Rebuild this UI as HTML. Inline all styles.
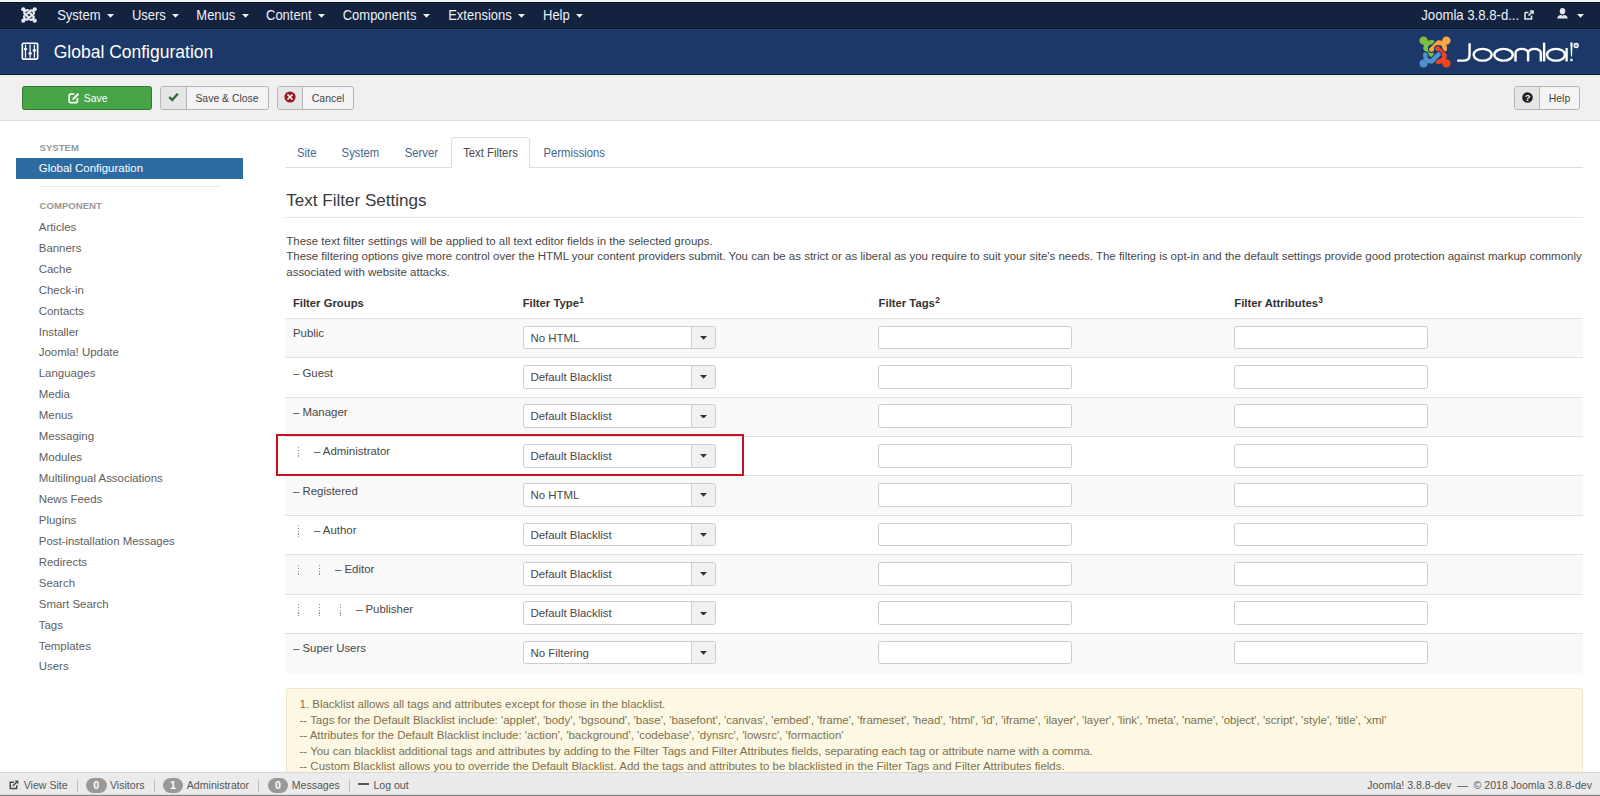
<!DOCTYPE html><html><head><meta charset="utf-8"><style>
*{box-sizing:border-box}
html,body{margin:0;padding:0;width:1600px;height:796px;overflow:hidden;background:#fff;font-family:"Liberation Sans",sans-serif;color:#333}
.a{position:absolute;white-space:nowrap;line-height:1}
.r{position:absolute}
</style></head><body>
<div class="r" style="left:0;top:0;width:1600px;height:2px;background:#f2f3f5"></div>
<div class="r" style="left:0;top:2px;width:1600px;height:26.5px;background:#13233f;border-top:1px solid #0a1326;border-bottom:1px solid #0b1428"></div>
<div class="a" style="left:57.20px;top:9px;font-size:13px;color:#eef0f6;font-weight:400;transform:scaleY(1.08);transform-origin:0 11px;">System</div>
<div class="a" style="left:131.90px;top:9px;font-size:13px;color:#eef0f6;font-weight:400;transform:scaleY(1.08);transform-origin:0 11px;">Users</div>
<div class="a" style="left:196.30px;top:9px;font-size:13px;color:#eef0f6;font-weight:400;transform:scaleY(1.08);transform-origin:0 11px;">Menus</div>
<div class="a" style="left:266.00px;top:9px;font-size:13px;color:#eef0f6;font-weight:400;transform:scaleY(1.08);transform-origin:0 11px;">Content</div>
<div class="a" style="left:342.70px;top:9px;font-size:13px;color:#eef0f6;font-weight:400;transform:scaleY(1.08);transform-origin:0 11px;">Components</div>
<div class="a" style="left:448.20px;top:9px;font-size:13px;color:#eef0f6;font-weight:400;transform:scaleY(1.08);transform-origin:0 11px;">Extensions</div>
<div class="a" style="left:543.00px;top:9px;font-size:13px;color:#eef0f6;font-weight:400;transform:scaleY(1.08);transform-origin:0 11px;">Help</div>
<svg class="r" style="left:106.84px;top:14.2px" width="7" height="3.7" viewBox="0 0 7 3.7"><polygon points="0,0 7,0 3.5,3.7" fill="#eef0f6"/></svg>
<svg class="r" style="left:172.15000000000003px;top:14.2px" width="7" height="3.7" viewBox="0 0 7 3.7"><polygon points="0,0 7,0 3.5,3.7" fill="#eef0f6"/></svg>
<svg class="r" style="left:241.63000000000002px;top:14.2px" width="7" height="3.7" viewBox="0 0 7 3.7"><polygon points="0,0 7,0 3.5,3.7" fill="#eef0f6"/></svg>
<svg class="r" style="left:317.85px;top:14.2px" width="7" height="3.7" viewBox="0 0 7 3.7"><polygon points="0,0 7,0 3.5,3.7" fill="#eef0f6"/></svg>
<svg class="r" style="left:422.71999999999997px;top:14.2px" width="7" height="3.7" viewBox="0 0 7 3.7"><polygon points="0,0 7,0 3.5,3.7" fill="#eef0f6"/></svg>
<svg class="r" style="left:518.0899999999999px;top:14.2px" width="7" height="3.7" viewBox="0 0 7 3.7"><polygon points="0,0 7,0 3.5,3.7" fill="#eef0f6"/></svg>
<svg class="r" style="left:576.05px;top:14.2px" width="7" height="3.7" viewBox="0 0 7 3.7"><polygon points="0,0 7,0 3.5,3.7" fill="#eef0f6"/></svg>
<svg class="r" style="left:20.5px;top:6.5px" width="16" height="16" viewBox="0 0 32 32"><path d="M13.50,6.30 Q6.60,6.00 6.60,12.50 L13.60,19.60" stroke="#e6e8ef" stroke-width="4.6" fill="none" stroke-linecap="round"/><circle cx="4.60" cy="4.60" r="4.2" fill="#e6e8ef"/><path d="M25.70,13.50 Q26.00,6.60 19.50,6.60 L12.40,13.60" stroke="#e6e8ef" stroke-width="4.6" fill="none" stroke-linecap="round"/><circle cx="27.40" cy="4.60" r="4.2" fill="#e6e8ef"/><path d="M18.50,25.70 Q25.40,26.00 25.40,19.50 L18.40,12.40" stroke="#e6e8ef" stroke-width="4.6" fill="none" stroke-linecap="round"/><circle cx="27.40" cy="27.40" r="4.2" fill="#e6e8ef"/><path d="M6.30,18.50 Q6.00,25.40 12.50,25.40 L19.60,18.40" stroke="#e6e8ef" stroke-width="4.6" fill="none" stroke-linecap="round"/><circle cx="4.60" cy="27.40" r="4.2" fill="#e6e8ef"/></svg>
<div class="a" style="left:1421.30px;top:9px;font-size:13.15px;color:#eef0f6;font-weight:400;transform:scaleY(1.08);transform-origin:0 11px;">Joomla 3.8.8-d...</div>
<svg class="r" style="left:1523.5px;top:10px" width="10" height="10" viewBox="0 0 10 10">
<path d="M1 2.5 H4.5 M1 2.5 V9 H7.5 V5.5" stroke="#e4e6ee" stroke-width="1.6" fill="none"/>
<path d="M4.5 5.5 L9 1 M6 1 H9 V4" stroke="#e4e6ee" stroke-width="1.6" fill="none"/></svg>
<svg class="r" style="left:1556.5px;top:7px" width="11" height="12" viewBox="0 0 11 12">
<ellipse cx="5.5" cy="4.2" rx="2.7" ry="3.1" fill="#e4e6ee"/><path d="M0.3 11.6 C0.3 9 2 8.2 4 7.9 L5.5 8.8 L7 7.9 C9 8.2 10.7 9 10.7 11.6 Z" fill="#e4e6ee"/></svg>
<svg class="r" style="left:1576.8px;top:14.2px" width="7" height="3.7" viewBox="0 0 7 3.7"><polygon points="0,0 7,0 3.5,3.7" fill="#eef0f6"/></svg>
<div class="r" style="left:0;top:28.5px;width:1600px;height:46px;background:#1b3868;border-top:1px solid #2a4575;border-bottom:1px solid #0d1c3a"></div>
<div class="r" style="left:0;top:74.5px;width:1600px;height:1px;background:#e4e9f0"></div>
<div class="a" style="left:53.70px;top:44px;font-size:17.5px;color:#ffffff;font-weight:400;">Global Configuration</div>
<svg class="r" style="left:21px;top:41.5px" width="18" height="19" viewBox="0 0 18 19">
<rect x="1.33" y="1.23" width="15.3" height="15.9" rx="1.2" fill="none" stroke="#fff" stroke-width="1.66"/>
<path d="M4.5 2.6 V15.8 M9.1 2.6 V15.8 M13.4 2.6 V15.8" stroke="#fff" stroke-width="1.2"/>
<rect x="2.9" y="6.05" width="3.2" height="2.3" rx="1" fill="#fff"/><rect x="7.3" y="10.25" width="3.6" height="2.3" rx="1" fill="#fff"/><rect x="11.6" y="7.15" width="3.6" height="2.3" rx="1" fill="#fff"/>
</svg>
<svg class="r" style="left:1419px;top:36px" width="32" height="32" viewBox="0 0 32 32"><path d="M13.50,6.30 Q6.60,6.00 6.60,12.50 L13.60,19.60" stroke="#1b3868" stroke-width="6.6" fill="none" stroke-linecap="round"/><path d="M13.50,6.30 Q6.60,6.00 6.60,12.50 L13.60,19.60" stroke="#7ac143" stroke-width="4.6" fill="none" stroke-linecap="round"/><circle cx="4.60" cy="4.60" r="4.2" fill="#7ac143"/><path d="M25.70,13.50 Q26.00,6.60 19.50,6.60 L12.40,13.60" stroke="#1b3868" stroke-width="6.6" fill="none" stroke-linecap="round"/><path d="M25.70,13.50 Q26.00,6.60 19.50,6.60 L12.40,13.60" stroke="#f9a541" stroke-width="4.6" fill="none" stroke-linecap="round"/><circle cx="27.40" cy="4.60" r="4.2" fill="#f9a541"/><path d="M18.50,25.70 Q25.40,26.00 25.40,19.50 L18.40,12.40" stroke="#1b3868" stroke-width="6.6" fill="none" stroke-linecap="round"/><path d="M18.50,25.70 Q25.40,26.00 25.40,19.50 L18.40,12.40" stroke="#f44321" stroke-width="4.6" fill="none" stroke-linecap="round"/><circle cx="27.40" cy="27.40" r="4.2" fill="#f44321"/><path d="M6.30,18.50 Q6.00,25.40 12.50,25.40 L19.60,18.40" stroke="#1b3868" stroke-width="6.6" fill="none" stroke-linecap="round"/><path d="M6.30,18.50 Q6.00,25.40 12.50,25.40 L19.60,18.40" stroke="#5091cd" stroke-width="4.6" fill="none" stroke-linecap="round"/><circle cx="4.60" cy="27.40" r="4.2" fill="#5091cd"/></svg>
<svg class="r" style="left:1452px;top:36px" width="138" height="32" viewBox="0 0 138 32">
<g stroke="#fff" stroke-width="2.4" fill="none">
<path d="M17.6,7.2 L17.6,18.5 C17.6,22.6 15.6,24.6 12,24.6 L5.2,24.6"/>
<ellipse cx="30.65" cy="18.75" rx="9" ry="5.85"/>
<ellipse cx="51.55" cy="18.75" rx="9.2" ry="5.85"/>
<path d="M63.5,25.4 V17 A6.3,4.1 0 0 1 76.1,17 V25.4 M76.1,17 A6.3,4.1 0 0 1 88.8,17 V25.4"/>
<path d="M92.1,6.6 V25.4"/>
<ellipse cx="104" cy="18.75" rx="9" ry="5.85"/>
<path d="M114.6,12 V25.4"/>
<circle cx="124.2" cy="9.5" r="2.1" stroke-width="1.1" fill="#8fa0bd"/>
</g>
<path d="M118.3,6.5 H120.7 L120,20.5 H119 Z" fill="#fff"/>
<rect x="118.4" y="22.8" width="2.2" height="2.4" fill="#fff"/>
</svg>
<div class="r" style="left:0;top:74.5px;width:1600px;height:46.5px;background:#f0f0f0;border-top:1px solid #e2e7ee;border-bottom:1px solid #d9d9d9"></div>
<div class="r" style="left:22px;top:86px;width:130px;height:24px;background:#47a447;border:1px solid #307a30;border-radius:2.5px"></div>
<svg class="r" style="left:67.5px;top:92px" width="12" height="11.5" viewBox="0 0 12 11.5">
<path d="M6.2 2.2 H2.6 Q1.2 2.2 1.2 3.6 V9.2 Q1.2 10.6 2.6 10.6 H8 Q9.4 10.6 9.4 9.2 V6" stroke="#fff" stroke-width="1.7" fill="none"/>
<path d="M4.3 8.1 L4.6 6 L9.6 1 L11.2 2.6 L6.2 7.6 Z" fill="#fff"/></svg>
<div class="a" style="left:83.80px;top:94px;font-size:10.45px;color:#fff;font-weight:400;transform:scaleY(1.06);transform-origin:0 8px;">Save</div>
<div class="r" style="left:160px;top:86px;width:108.5px;height:23.5px;background:#f4f4f4;border:1px solid #b5b5b5;border-radius:3px;overflow:hidden"><div class="r" style="left:0;top:0;width:26px;height:100%;background:#e6e6e6;border-right:1px solid #b5b5b5"></div></div>
<div class="a" style="left:195.40px;top:94px;font-size:10.45px;color:#444;font-weight:400;transform:scaleY(1.06);transform-origin:0 8px;">Save &amp; Close</div>
<svg class="r" style="left:168px;top:92px" width="11" height="10" viewBox="0 0 11 10">
<path d="M1.2 5 L4.2 8 L9.8 1.8" stroke="#2e6b2e" stroke-width="2.4" fill="none"/></svg>
<div class="r" style="left:276.8px;top:86px;width:77.39999999999998px;height:23.5px;background:#f4f4f4;border:1px solid #b5b5b5;border-radius:3px;overflow:hidden"><div class="r" style="left:0;top:0;width:25px;height:100%;background:#e6e6e6;border-right:1px solid #b5b5b5"></div></div>
<div class="a" style="left:311.80px;top:94px;font-size:10.45px;color:#444;font-weight:400;transform:scaleY(1.06);transform-origin:0 8px;">Cancel</div>
<svg class="r" style="left:284.3px;top:91px" width="12" height="12" viewBox="0 0 12 12">
<circle cx="6" cy="6" r="5.6" fill="#931c20"/><path d="M3.5 3.5 L8.5 8.5 M8.5 3.5 L3.5 8.5" stroke="#fff" stroke-width="1.5"/></svg>
<div class="r" style="left:1514px;top:86px;width:65.5px;height:23.5px;background:#f4f4f4;border:1px solid #b5b5b5;border-radius:3px;overflow:hidden"><div class="r" style="left:0;top:0;width:25.4px;height:100%;background:#e6e6e6;border-right:1px solid #b5b5b5"></div></div>
<div class="a" style="left:1548.75px;top:94px;font-size:10.45px;color:#444;font-weight:400;transform:scaleY(1.06);transform-origin:0 8px;">Help</div>
<svg class="r" style="left:1521.5px;top:91.5px" width="11" height="11" viewBox="0 0 11 11">
<circle cx="5.5" cy="5.5" r="5.3" fill="#222"/><text x="5.6" y="9.1" font-family="Liberation Sans" font-weight="bold" font-size="9.5" fill="#f4f4f4" text-anchor="middle">?</text></svg>
<div class="a" style="left:39.50px;top:143px;font-size:9.6px;color:#999;font-weight:700;">SYSTEM</div>
<div class="r" style="left:16px;top:158.2px;width:226.7px;height:20.6px;background:#2d6ca2"></div>
<div class="a" style="left:38.80px;top:163px;font-size:11.45px;color:#fff;font-weight:400;">Global Configuration</div>
<div class="r" style="left:40px;top:186px;width:180px;height:1px;background:#ebebeb"></div>
<div class="a" style="left:39.50px;top:201px;font-size:9.6px;color:#999;font-weight:700;">COMPONENT</div>
<div class="a" style="left:38.75px;top:222px;font-size:11.45px;color:#5e5e5e;font-weight:400;">Articles</div>
<div class="a" style="left:38.75px;top:243px;font-size:11.45px;color:#5e5e5e;font-weight:400;">Banners</div>
<div class="a" style="left:38.75px;top:264px;font-size:11.45px;color:#5e5e5e;font-weight:400;">Cache</div>
<div class="a" style="left:38.75px;top:285px;font-size:11.45px;color:#5e5e5e;font-weight:400;">Check-in</div>
<div class="a" style="left:38.75px;top:306px;font-size:11.45px;color:#5e5e5e;font-weight:400;">Contacts</div>
<div class="a" style="left:38.75px;top:327px;font-size:11.45px;color:#5e5e5e;font-weight:400;">Installer</div>
<div class="a" style="left:38.75px;top:347px;font-size:11.45px;color:#5e5e5e;font-weight:400;">Joomla! Update</div>
<div class="a" style="left:38.75px;top:368px;font-size:11.45px;color:#5e5e5e;font-weight:400;">Languages</div>
<div class="a" style="left:38.75px;top:389px;font-size:11.45px;color:#5e5e5e;font-weight:400;">Media</div>
<div class="a" style="left:38.75px;top:410px;font-size:11.45px;color:#5e5e5e;font-weight:400;">Menus</div>
<div class="a" style="left:38.75px;top:431px;font-size:11.45px;color:#5e5e5e;font-weight:400;">Messaging</div>
<div class="a" style="left:38.75px;top:452px;font-size:11.45px;color:#5e5e5e;font-weight:400;">Modules</div>
<div class="a" style="left:38.75px;top:473px;font-size:11.45px;color:#5e5e5e;font-weight:400;">Multilingual Associations</div>
<div class="a" style="left:38.75px;top:494px;font-size:11.45px;color:#5e5e5e;font-weight:400;">News Feeds</div>
<div class="a" style="left:38.75px;top:515px;font-size:11.45px;color:#5e5e5e;font-weight:400;">Plugins</div>
<div class="a" style="left:38.75px;top:536px;font-size:11.45px;color:#5e5e5e;font-weight:400;">Post-installation Messages</div>
<div class="a" style="left:38.75px;top:557px;font-size:11.45px;color:#5e5e5e;font-weight:400;">Redirects</div>
<div class="a" style="left:38.75px;top:578px;font-size:11.45px;color:#5e5e5e;font-weight:400;">Search</div>
<div class="a" style="left:38.75px;top:599px;font-size:11.45px;color:#5e5e5e;font-weight:400;">Smart Search</div>
<div class="a" style="left:38.75px;top:620px;font-size:11.45px;color:#5e5e5e;font-weight:400;">Tags</div>
<div class="a" style="left:38.75px;top:641px;font-size:11.45px;color:#5e5e5e;font-weight:400;">Templates</div>
<div class="a" style="left:38.75px;top:661px;font-size:11.45px;color:#5e5e5e;font-weight:400;">Users</div>
<div class="r" style="left:285px;top:167.4px;width:1298px;height:1px;background:#ddd"></div>
<div class="r" style="left:451px;top:137.2px;width:79px;height:31.3px;background:#fff;border:1px solid #ddd;border-bottom:none;border-radius:4px 4px 0 0"></div>
<div class="a" style="left:297.00px;top:148px;font-size:11.3px;color:#46648c;font-weight:400;transform:scaleY(1.08);transform-origin:0 9px;">Site</div>
<div class="a" style="left:341.60px;top:148px;font-size:11.3px;color:#46648c;font-weight:400;transform:scaleY(1.08);transform-origin:0 9px;">System</div>
<div class="a" style="left:404.70px;top:148px;font-size:11.3px;color:#46648c;font-weight:400;transform:scaleY(1.08);transform-origin:0 9px;">Server</div>
<div class="a" style="left:463.20px;top:148px;font-size:11.3px;color:#4a4a4a;font-weight:400;transform:scaleY(1.08);transform-origin:0 9px;">Text Filters</div>
<div class="a" style="left:543.50px;top:148px;font-size:11.3px;color:#46648c;font-weight:400;transform:scaleY(1.08);transform-origin:0 9px;">Permissions</div>
<div class="a" style="left:286.20px;top:192px;font-size:17.08px;color:#3a3a3a;font-weight:400;">Text Filter Settings</div>
<div class="r" style="left:285px;top:216.7px;width:1298px;height:1px;background:#e5e5e5"></div>
<div class="a" style="left:286.25px;top:236px;font-size:11.49px;color:#474747;font-weight:400;">These text filter settings will be applied to all text editor fields in the selected groups.</div>
<div class="a" style="left:286.25px;top:251px;font-size:11.49px;color:#474747;font-weight:400;">These filtering options give more control over the HTML your content providers submit. You can be as strict or as liberal as you require to suit your site's needs. The filtering is opt-in and the default settings provide good protection against markup commonly</div>
<div class="a" style="left:286.25px;top:267px;font-size:11.49px;color:#474747;font-weight:400;">associated with website attacks.</div>
<div class="a" style="left:292.90px;top:298px;font-size:11.3px;color:#333;font-weight:700;">Filter Groups</div>
<div class="a" style="left:522.65px;top:298px;font-size:11.3px;color:#333;font-weight:700;">Filter Type<span style="font-size:8.3px;position:relative;top:-4.3px;margin-left:0.3px">1</span></div>
<div class="a" style="left:878.60px;top:298px;font-size:11.3px;color:#333;font-weight:700;">Filter Tags<span style="font-size:8.3px;position:relative;top:-4.3px;margin-left:0.3px">2</span></div>
<div class="a" style="left:1234.30px;top:298px;font-size:11.3px;color:#333;font-weight:700;">Filter Attributes<span style="font-size:8.3px;position:relative;top:-4.3px;margin-left:0.3px">3</span></div>
<div class="r" style="left:285px;top:318.00px;width:1298px;height:40.37px;background:#f9f9f9;border-top:1px solid #e1e1e1"></div>
<div class="a" style="left:292.90px;top:328px;font-size:11.45px;color:#474747;font-weight:400;">Public</div>
<div class="r" style="left:522.5px;top:325.70px;width:193.5px;height:23.8px;background:#fff;border:1px solid #cdcdcd;border-radius:2.5px;overflow:hidden"><div class="r" style="right:0;top:0;width:24.2px;height:100%;background:#f1f1f1;border-left:1px solid #d0d0d0"></div></div>
<svg class="r" style="left:700px;top:336.0px" width="7" height="3.7" viewBox="0 0 7 3.7"><polygon points="0,0 7,0 3.5,3.7" fill="#333"/></svg>
<div class="a" style="left:530.40px;top:333px;font-size:11.45px;color:#474747;font-weight:400;">No HTML</div>
<div class="r" style="left:878.3px;top:325.70px;width:193.7px;height:23.8px;background:#fff;border:1px solid #cdcdcd;border-radius:2.5px"></div>
<div class="r" style="left:1234.3px;top:325.70px;width:193.7px;height:23.8px;background:#fff;border:1px solid #cdcdcd;border-radius:2.5px"></div>
<div class="r" style="left:285px;top:357.37px;width:1298px;height:40.37px;background:#fff;border-top:1px solid #e1e1e1"></div>
<div class="a" style="left:292.90px;top:368px;font-size:11.45px;color:#474747;font-weight:400;">&ndash; Guest</div>
<div class="r" style="left:522.5px;top:365.07px;width:193.5px;height:23.8px;background:#fff;border:1px solid #cdcdcd;border-radius:2.5px;overflow:hidden"><div class="r" style="right:0;top:0;width:24.2px;height:100%;background:#f1f1f1;border-left:1px solid #d0d0d0"></div></div>
<svg class="r" style="left:700px;top:375.37px" width="7" height="3.7" viewBox="0 0 7 3.7"><polygon points="0,0 7,0 3.5,3.7" fill="#333"/></svg>
<div class="a" style="left:530.40px;top:372px;font-size:11.45px;color:#474747;font-weight:400;">Default Blacklist</div>
<div class="r" style="left:878.3px;top:365.07px;width:193.7px;height:23.8px;background:#fff;border:1px solid #cdcdcd;border-radius:2.5px"></div>
<div class="r" style="left:1234.3px;top:365.07px;width:193.7px;height:23.8px;background:#fff;border:1px solid #cdcdcd;border-radius:2.5px"></div>
<div class="r" style="left:285px;top:396.74px;width:1298px;height:40.37px;background:#f9f9f9;border-top:1px solid #e1e1e1"></div>
<div class="a" style="left:292.90px;top:407px;font-size:11.45px;color:#474747;font-weight:400;">&ndash; Manager</div>
<div class="r" style="left:522.5px;top:404.44px;width:193.5px;height:23.8px;background:#fff;border:1px solid #cdcdcd;border-radius:2.5px;overflow:hidden"><div class="r" style="right:0;top:0;width:24.2px;height:100%;background:#f1f1f1;border-left:1px solid #d0d0d0"></div></div>
<svg class="r" style="left:700px;top:414.74px" width="7" height="3.7" viewBox="0 0 7 3.7"><polygon points="0,0 7,0 3.5,3.7" fill="#333"/></svg>
<div class="a" style="left:530.40px;top:411px;font-size:11.45px;color:#474747;font-weight:400;">Default Blacklist</div>
<div class="r" style="left:878.3px;top:404.44px;width:193.7px;height:23.8px;background:#fff;border:1px solid #cdcdcd;border-radius:2.5px"></div>
<div class="r" style="left:1234.3px;top:404.44px;width:193.7px;height:23.8px;background:#fff;border:1px solid #cdcdcd;border-radius:2.5px"></div>
<div class="r" style="left:285px;top:436.11px;width:1298px;height:40.37px;background:#fff;border-top:1px solid #e1e1e1"></div>
<div class="r" style="left:298.0px;top:446.61px;width:1px;height:11.5px;background:repeating-linear-gradient(to bottom,#8f8f8f 0 1.4px,transparent 1.4px 2.8px)"></div>
<div class="a" style="left:313.90px;top:446px;font-size:11.45px;color:#474747;font-weight:400;">&ndash; Administrator</div>
<div class="r" style="left:522.5px;top:443.81px;width:193.5px;height:23.8px;background:#fff;border:1px solid #cdcdcd;border-radius:2.5px;overflow:hidden"><div class="r" style="right:0;top:0;width:24.2px;height:100%;background:#f1f1f1;border-left:1px solid #d0d0d0"></div></div>
<svg class="r" style="left:700px;top:454.11px" width="7" height="3.7" viewBox="0 0 7 3.7"><polygon points="0,0 7,0 3.5,3.7" fill="#333"/></svg>
<div class="a" style="left:530.40px;top:451px;font-size:11.45px;color:#474747;font-weight:400;">Default Blacklist</div>
<div class="r" style="left:878.3px;top:443.81px;width:193.7px;height:23.8px;background:#fff;border:1px solid #cdcdcd;border-radius:2.5px"></div>
<div class="r" style="left:1234.3px;top:443.81px;width:193.7px;height:23.8px;background:#fff;border:1px solid #cdcdcd;border-radius:2.5px"></div>
<div class="r" style="left:285px;top:475.48px;width:1298px;height:40.37px;background:#f9f9f9;border-top:1px solid #e1e1e1"></div>
<div class="a" style="left:292.90px;top:486px;font-size:11.45px;color:#474747;font-weight:400;">&ndash; Registered</div>
<div class="r" style="left:522.5px;top:483.18px;width:193.5px;height:23.8px;background:#fff;border:1px solid #cdcdcd;border-radius:2.5px;overflow:hidden"><div class="r" style="right:0;top:0;width:24.2px;height:100%;background:#f1f1f1;border-left:1px solid #d0d0d0"></div></div>
<svg class="r" style="left:700px;top:493.48px" width="7" height="3.7" viewBox="0 0 7 3.7"><polygon points="0,0 7,0 3.5,3.7" fill="#333"/></svg>
<div class="a" style="left:530.40px;top:490px;font-size:11.45px;color:#474747;font-weight:400;">No HTML</div>
<div class="r" style="left:878.3px;top:483.18px;width:193.7px;height:23.8px;background:#fff;border:1px solid #cdcdcd;border-radius:2.5px"></div>
<div class="r" style="left:1234.3px;top:483.18px;width:193.7px;height:23.8px;background:#fff;border:1px solid #cdcdcd;border-radius:2.5px"></div>
<div class="r" style="left:285px;top:514.85px;width:1298px;height:40.37px;background:#fff;border-top:1px solid #e1e1e1"></div>
<div class="r" style="left:298.0px;top:525.35px;width:1px;height:11.5px;background:repeating-linear-gradient(to bottom,#8f8f8f 0 1.4px,transparent 1.4px 2.8px)"></div>
<div class="a" style="left:313.90px;top:525px;font-size:11.45px;color:#474747;font-weight:400;">&ndash; Author</div>
<div class="r" style="left:522.5px;top:522.55px;width:193.5px;height:23.8px;background:#fff;border:1px solid #cdcdcd;border-radius:2.5px;overflow:hidden"><div class="r" style="right:0;top:0;width:24.2px;height:100%;background:#f1f1f1;border-left:1px solid #d0d0d0"></div></div>
<svg class="r" style="left:700px;top:532.85px" width="7" height="3.7" viewBox="0 0 7 3.7"><polygon points="0,0 7,0 3.5,3.7" fill="#333"/></svg>
<div class="a" style="left:530.40px;top:530px;font-size:11.45px;color:#474747;font-weight:400;">Default Blacklist</div>
<div class="r" style="left:878.3px;top:522.55px;width:193.7px;height:23.8px;background:#fff;border:1px solid #cdcdcd;border-radius:2.5px"></div>
<div class="r" style="left:1234.3px;top:522.55px;width:193.7px;height:23.8px;background:#fff;border:1px solid #cdcdcd;border-radius:2.5px"></div>
<div class="r" style="left:285px;top:554.22px;width:1298px;height:40.37px;background:#f9f9f9;border-top:1px solid #e1e1e1"></div>
<div class="r" style="left:298.0px;top:564.72px;width:1px;height:11.5px;background:repeating-linear-gradient(to bottom,#8f8f8f 0 1.4px,transparent 1.4px 2.8px)"></div>
<div class="r" style="left:319.0px;top:564.72px;width:1px;height:11.5px;background:repeating-linear-gradient(to bottom,#8f8f8f 0 1.4px,transparent 1.4px 2.8px)"></div>
<div class="a" style="left:334.90px;top:564px;font-size:11.45px;color:#474747;font-weight:400;">&ndash; Editor</div>
<div class="r" style="left:522.5px;top:561.92px;width:193.5px;height:23.8px;background:#fff;border:1px solid #cdcdcd;border-radius:2.5px;overflow:hidden"><div class="r" style="right:0;top:0;width:24.2px;height:100%;background:#f1f1f1;border-left:1px solid #d0d0d0"></div></div>
<svg class="r" style="left:700px;top:572.22px" width="7" height="3.7" viewBox="0 0 7 3.7"><polygon points="0,0 7,0 3.5,3.7" fill="#333"/></svg>
<div class="a" style="left:530.40px;top:569px;font-size:11.45px;color:#474747;font-weight:400;">Default Blacklist</div>
<div class="r" style="left:878.3px;top:561.92px;width:193.7px;height:23.8px;background:#fff;border:1px solid #cdcdcd;border-radius:2.5px"></div>
<div class="r" style="left:1234.3px;top:561.92px;width:193.7px;height:23.8px;background:#fff;border:1px solid #cdcdcd;border-radius:2.5px"></div>
<div class="r" style="left:285px;top:593.59px;width:1298px;height:40.37px;background:#fff;border-top:1px solid #e1e1e1"></div>
<div class="r" style="left:298.0px;top:604.09px;width:1px;height:11.5px;background:repeating-linear-gradient(to bottom,#8f8f8f 0 1.4px,transparent 1.4px 2.8px)"></div>
<div class="r" style="left:319.0px;top:604.09px;width:1px;height:11.5px;background:repeating-linear-gradient(to bottom,#8f8f8f 0 1.4px,transparent 1.4px 2.8px)"></div>
<div class="r" style="left:340.0px;top:604.09px;width:1px;height:11.5px;background:repeating-linear-gradient(to bottom,#8f8f8f 0 1.4px,transparent 1.4px 2.8px)"></div>
<div class="a" style="left:355.90px;top:604px;font-size:11.45px;color:#474747;font-weight:400;">&ndash; Publisher</div>
<div class="r" style="left:522.5px;top:601.29px;width:193.5px;height:23.8px;background:#fff;border:1px solid #cdcdcd;border-radius:2.5px;overflow:hidden"><div class="r" style="right:0;top:0;width:24.2px;height:100%;background:#f1f1f1;border-left:1px solid #d0d0d0"></div></div>
<svg class="r" style="left:700px;top:611.5899999999999px" width="7" height="3.7" viewBox="0 0 7 3.7"><polygon points="0,0 7,0 3.5,3.7" fill="#333"/></svg>
<div class="a" style="left:530.40px;top:608px;font-size:11.45px;color:#474747;font-weight:400;">Default Blacklist</div>
<div class="r" style="left:878.3px;top:601.29px;width:193.7px;height:23.8px;background:#fff;border:1px solid #cdcdcd;border-radius:2.5px"></div>
<div class="r" style="left:1234.3px;top:601.29px;width:193.7px;height:23.8px;background:#fff;border:1px solid #cdcdcd;border-radius:2.5px"></div>
<div class="r" style="left:285px;top:632.96px;width:1298px;height:40.37px;background:#f9f9f9;border-top:1px solid #e1e1e1"></div>
<div class="a" style="left:292.90px;top:643px;font-size:11.45px;color:#474747;font-weight:400;">&ndash; Super Users</div>
<div class="r" style="left:522.5px;top:640.66px;width:193.5px;height:23.8px;background:#fff;border:1px solid #cdcdcd;border-radius:2.5px;overflow:hidden"><div class="r" style="right:0;top:0;width:24.2px;height:100%;background:#f1f1f1;border-left:1px solid #d0d0d0"></div></div>
<svg class="r" style="left:700px;top:650.96px" width="7" height="3.7" viewBox="0 0 7 3.7"><polygon points="0,0 7,0 3.5,3.7" fill="#333"/></svg>
<div class="a" style="left:530.40px;top:648px;font-size:11.45px;color:#474747;font-weight:400;">No Filtering</div>
<div class="r" style="left:878.3px;top:640.66px;width:193.7px;height:23.8px;background:#fff;border:1px solid #cdcdcd;border-radius:2.5px"></div>
<div class="r" style="left:1234.3px;top:640.66px;width:193.7px;height:23.8px;background:#fff;border:1px solid #cdcdcd;border-radius:2.5px"></div>
<div class="r" style="left:276px;top:433.8px;width:467.5px;height:41.8px;border:2.2px solid #c8101e"></div>
<div class="r" style="left:285.5px;top:688px;width:1297.5px;height:120px;background:#fcf8e3;border:1px solid #efe6cb;border-radius:2.5px"></div>
<div class="a" style="left:299.50px;top:699px;font-size:11.49px;color:#7d7150;font-weight:400;">1. Blacklist allows all tags and attributes except for those in the blacklist.</div>
<div class="a" style="left:299.50px;top:715px;font-size:11.49px;color:#7d7150;font-weight:400;">-- Tags for the Default Blacklist include: 'applet', 'body', 'bgsound', 'base', 'basefont', 'canvas', 'embed', 'frame', 'frameset', 'head', 'html', 'id', 'iframe', 'ilayer', 'layer', 'link', 'meta', 'name', 'object', 'script', 'style', 'title', 'xml'</div>
<div class="a" style="left:299.50px;top:730px;font-size:11.49px;color:#7d7150;font-weight:400;">-- Attributes for the Default Blacklist include: 'action', 'background', 'codebase', 'dynsrc', 'lowsrc', 'formaction'</div>
<div class="a" style="left:299.50px;top:746px;font-size:11.49px;color:#7d7150;font-weight:400;">-- You can blacklist additional tags and attributes by adding to the Filter Tags and Filter Attributes fields, separating each tag or attribute name with a comma.</div>
<div class="a" style="left:299.50px;top:761px;font-size:11.49px;color:#7d7150;font-weight:400;">-- Custom Blacklist allows you to override the Default Blacklist. Add the tags and attributes to be blacklisted in the Filter Tags and Filter Attributes fields.</div>
<div class="r" style="left:0;top:772px;width:1600px;height:24px;background:#ebebeb;border-top:1px solid #d9d9d9"></div>
<div class="r" style="left:0;top:794px;width:1600px;height:1px;background:#d8d8d8"></div>
<div class="r" style="left:0;top:795px;width:1600px;height:1px;background:#858585"></div>
<svg class="r" style="left:8.5px;top:779.5px" width="10" height="10" viewBox="0 0 10 10">
<path d="M5 2.3 H1.25 V8.6 H7.7 V5.2" stroke="#4a4a4a" stroke-width="1.5" fill="none"/>
<path d="M3.8 5.9 L8 1.8" stroke="#4a4a4a" stroke-width="1.4"/><path d="M5.6 0.6 H9.4 V4.4 Z" fill="#4a4a4a"/></svg>
<div class="a" style="left:23.75px;top:780px;font-size:10.58px;color:#555;font-weight:400;">View Site</div>
<div class="r" style="left:76.5px;top:780px;width:1px;height:12px;background:#bdbdbd"></div>
<div class="r" style="left:153.5px;top:780px;width:1px;height:12px;background:#bdbdbd"></div>
<div class="r" style="left:258.4px;top:780px;width:1px;height:12px;background:#bdbdbd"></div>
<div class="r" style="left:348.7px;top:780px;width:1px;height:12px;background:#bdbdbd"></div>
<div class="r" style="left:86px;top:777.5px;width:20.7px;height:15px;border-radius:7.5px;background:#999"></div>
<div class="a" style="left:93.20px;top:780px;font-size:10.58px;color:#fff;font-weight:700;">0</div>
<div class="r" style="left:162.75px;top:777.5px;width:20.7px;height:15px;border-radius:7.5px;background:#999"></div>
<div class="a" style="left:169.95px;top:780px;font-size:10.58px;color:#fff;font-weight:700;">1</div>
<div class="r" style="left:267.7px;top:777.5px;width:20.7px;height:15px;border-radius:7.5px;background:#999"></div>
<div class="a" style="left:274.90px;top:780px;font-size:10.58px;color:#fff;font-weight:700;">0</div>
<div class="a" style="left:110.00px;top:780px;font-size:10.58px;color:#555;font-weight:400;">Visitors</div>
<div class="a" style="left:186.80px;top:780px;font-size:10.58px;color:#555;font-weight:400;">Administrator</div>
<div class="a" style="left:291.70px;top:780px;font-size:10.58px;color:#555;font-weight:400;">Messages</div>
<div class="r" style="left:357.7px;top:783.2px;width:11px;height:2px;background:#555"></div>
<div class="a" style="left:373.40px;top:780px;font-size:10.58px;color:#555;font-weight:400;">Log out</div>
<div class="a" style="left:1367.20px;top:780px;font-size:10.58px;color:#555;font-weight:400;">Joomla! 3.8.8-dev &nbsp;&mdash;&nbsp; &copy; 2018 Joomla 3.8.8-dev</div>
</body></html>
